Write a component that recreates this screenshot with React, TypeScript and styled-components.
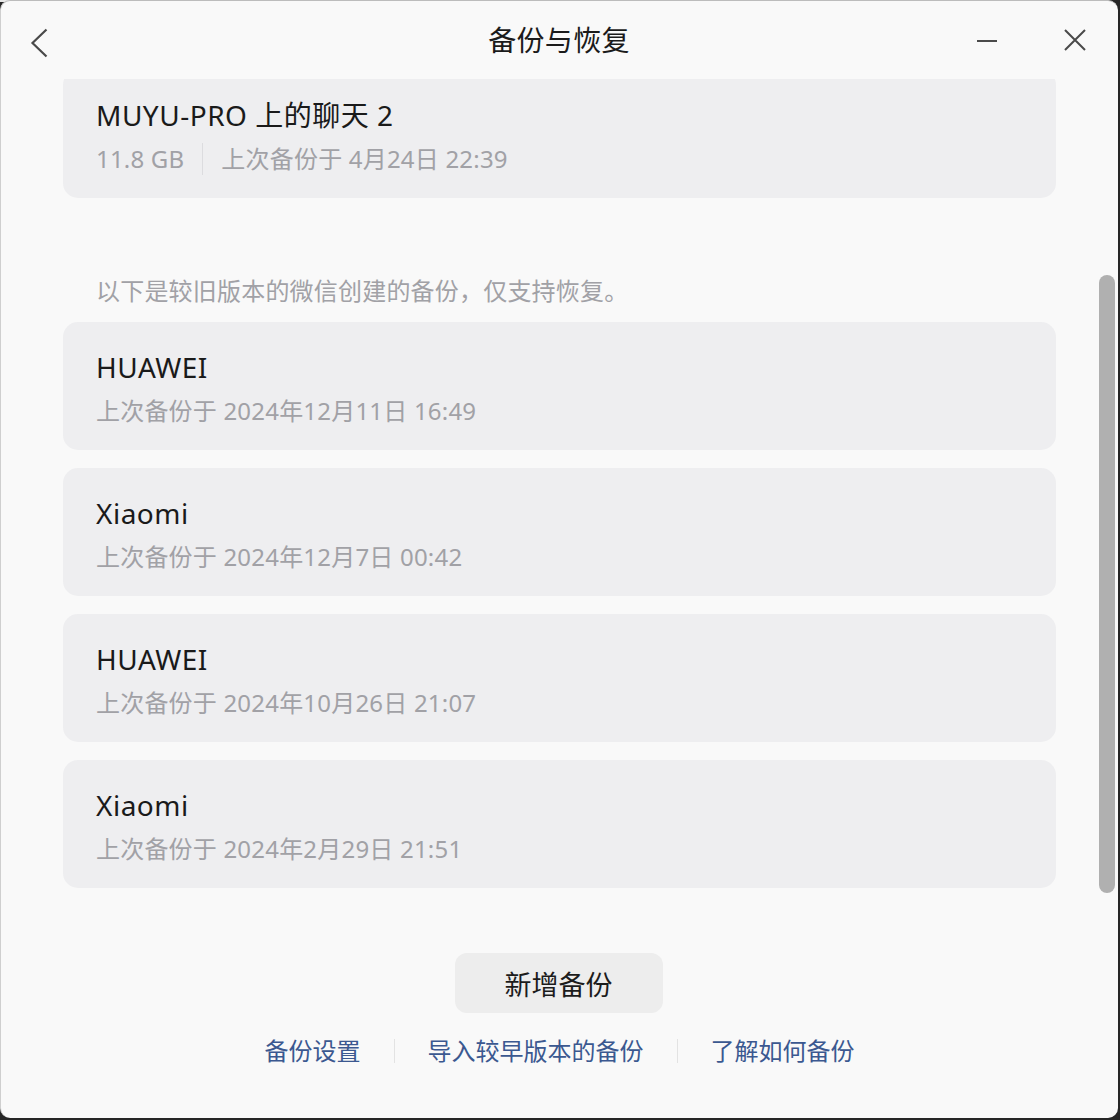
import React from "react";
import styled, { createGlobalStyle } from "styled-components";

const GlobalStyle = createGlobalStyle`
  html, body {
    margin: 0;
    padding: 0;
    width: 1120px;
    height: 1120px;
    overflow: hidden;
  }
  body {
    background: linear-gradient(#e6e6e6, #e6e6e6) 0 0 / 810px 2px no-repeat, #262626;
    font-family: "Noto Sans", "Noto Sans CJK SC", sans-serif;
  }
`;

type Backup = {
  name: string;
  size?: string;
  time: string;
};

const current: Backup = {
  name: "MUYU-PRO 上的聊天 2",
  size: "11.8 GB",
  time: "上次备份于 4月24日 22:39",
};

const legacy: Backup[] = [
  { name: "HUAWEI", time: "上次备份于 2024年12月11日 16:49" },
  { name: "Xiaomi", time: "上次备份于 2024年12月7日 00:42" },
  { name: "HUAWEI", time: "上次备份于 2024年10月26日 21:07" },
  { name: "Xiaomi", time: "上次备份于 2024年2月29日 21:51" },
];

const Window = styled.div`
  box-sizing: border-box;
  width: 1118px;
  height: 1118px;
  background: #f9f9f9;
  border-top: 1px solid #bcbcbc;
  border-left: 1px solid #cfcfcf;
  border-radius: 10px;
  overflow: hidden;
  display: flex;
  flex-direction: column;
`;

const TitleBar = styled.div`
  height: 78px;
  flex: none;
  display: grid;
  grid-template-columns: 1fr auto 1fr;
  align-items: center;
  padding: 0 25px 0 20px;
`;

const Title = styled.div`
  font-size: 28px;
  color: #1b1b1b;
  letter-spacing: 0.3px;
  line-height: 36px;
  margin-left: 4px;
`;

const IconButton = styled.button`
  border: none;
  background: transparent;
  padding: 0;
  width: 36px;
  height: 36px;
  display: flex;
  align-items: center;
  justify-content: center;
  color: #4a4a4a;
  cursor: pointer;
`;

const WindowControls = styled.div`
  display: flex;
  justify-content: flex-end;
  align-items: center;
  gap: 52px;
`;

const Left = styled.div`
  display: flex;
  align-items: center;
`;

const ScrollArea = styled.div`
  position: relative;
  height: 841px;
  flex: none;
  overflow: hidden;
`;

const List = styled.div`
  margin-top: -9px;
  padding: 0 62px 0 62px;
  display: flex;
  flex-direction: column;
`;

const Card = styled.div`
  box-sizing: border-box;
  height: 128px;
  background: #eeeef0;
  border-radius: 15px;
  padding: 27px 33px 0;
`;

const Stack = styled.div`
  display: flex;
  flex-direction: column;
  gap: 18px;
`;

const CardTitle = styled.div`
  font-size: 28px;
  line-height: 36px;
  letter-spacing: 0.5px;
  color: #1a1a1a;
  white-space: nowrap;
`;

const CardSub = styled.div`
  margin-top: 10px;
  font-size: 24px;
  line-height: 32px;
  letter-spacing: 0.2px;
  color: #a1a1a6;
  display: flex;
  align-items: center;
  white-space: nowrap;
`;

const SubDivider = styled.span`
  width: 1px;
  height: 32px;
  background: #dcdcdf;
  margin: 0 18px;
`;

const Note = styled.div`
  margin: 77px 0 15px 33px;
  font-size: 24px;
  line-height: 32px;
  letter-spacing: 0.2px;
  color: #a1a1a6;
`;

const Thumb = styled.div`
  position: absolute;
  right: 3px;
  top: 196px;
  width: 16px;
  height: 618px;
  border-radius: 8px;
  background: #b0b0b0;
`;

const Footer = styled.div`
  display: flex;
  flex-direction: column;
  align-items: center;
  padding-top: 33px;
`;

const PrimaryButton = styled.button`
  width: 208px;
  height: 60px;
  border: none;
  border-radius: 12px;
  background: #ededed;
  font-family: inherit;
  font-size: 27px;
  color: #1c1c1c;
  cursor: pointer;
  margin-right: 2px;
`;

const Links = styled.div`
  margin-top: 22px;
  display: flex;
  align-items: center;
`;

const LinkText = styled.a`
  font-size: 24px;
  line-height: 32px;
  color: #3b5890;
  text-decoration: none;
  padding: 0 33px;
  cursor: pointer;
`;

const LinkDivider = styled.span`
  width: 1px;
  height: 24px;
  background: #e3e3e3;
`;

const BackIcon = () => (
  <svg width="20" height="36" viewBox="0 0 20 36" fill="none">
    <path d="M17.5 7.5 L3.5 21 L17.5 34.5" stroke="currentColor" strokeWidth="2.2" />
  </svg>
);

const MinIcon = () => (
  <svg width="22" height="22" viewBox="0 0 22 22" fill="none">
    <path d="M1 12 H21" stroke="currentColor" strokeWidth="2" />
  </svg>
);

const CloseIcon = () => (
  <svg width="22" height="22" viewBox="0 0 22 22" fill="none">
    <path d="M1 1 L21 21 M21 1 L1 21" stroke="currentColor" strokeWidth="2" />
  </svg>
);

const BackupCard = ({ item }: { item: Backup }) => (
  <Card>
    <CardTitle>{item.name}</CardTitle>
    <CardSub>
      {item.size && (
        <>
          {item.size}
          <SubDivider />
        </>
      )}
      {item.time}
    </CardSub>
  </Card>
);

export default function App() {
  return (
    <>
      <GlobalStyle />
      <Window>
        <TitleBar>
          <Left>
            <IconButton aria-label="返回">
              <BackIcon />
            </IconButton>
          </Left>
          <Title>备份与恢复</Title>
          <WindowControls>
            <IconButton aria-label="最小化">
              <MinIcon />
            </IconButton>
            <IconButton aria-label="关闭">
              <CloseIcon />
            </IconButton>
          </WindowControls>
        </TitleBar>
        <ScrollArea>
          <List>
            <BackupCard item={current} />
            <Note>以下是较旧版本的微信创建的备份，仅支持恢复。</Note>
            <Stack>
              {legacy.map((b, i) => (
                <BackupCard key={i} item={b} />
              ))}
            </Stack>
          </List>
          <Thumb />
        </ScrollArea>
        <Footer>
          <PrimaryButton>新增备份</PrimaryButton>
          <Links>
            <LinkText>备份设置</LinkText>
            <LinkDivider />
            <LinkText>导入较早版本的备份</LinkText>
            <LinkDivider />
            <LinkText>了解如何备份</LinkText>
          </Links>
        </Footer>
      </Window>
    </>
  );
}
